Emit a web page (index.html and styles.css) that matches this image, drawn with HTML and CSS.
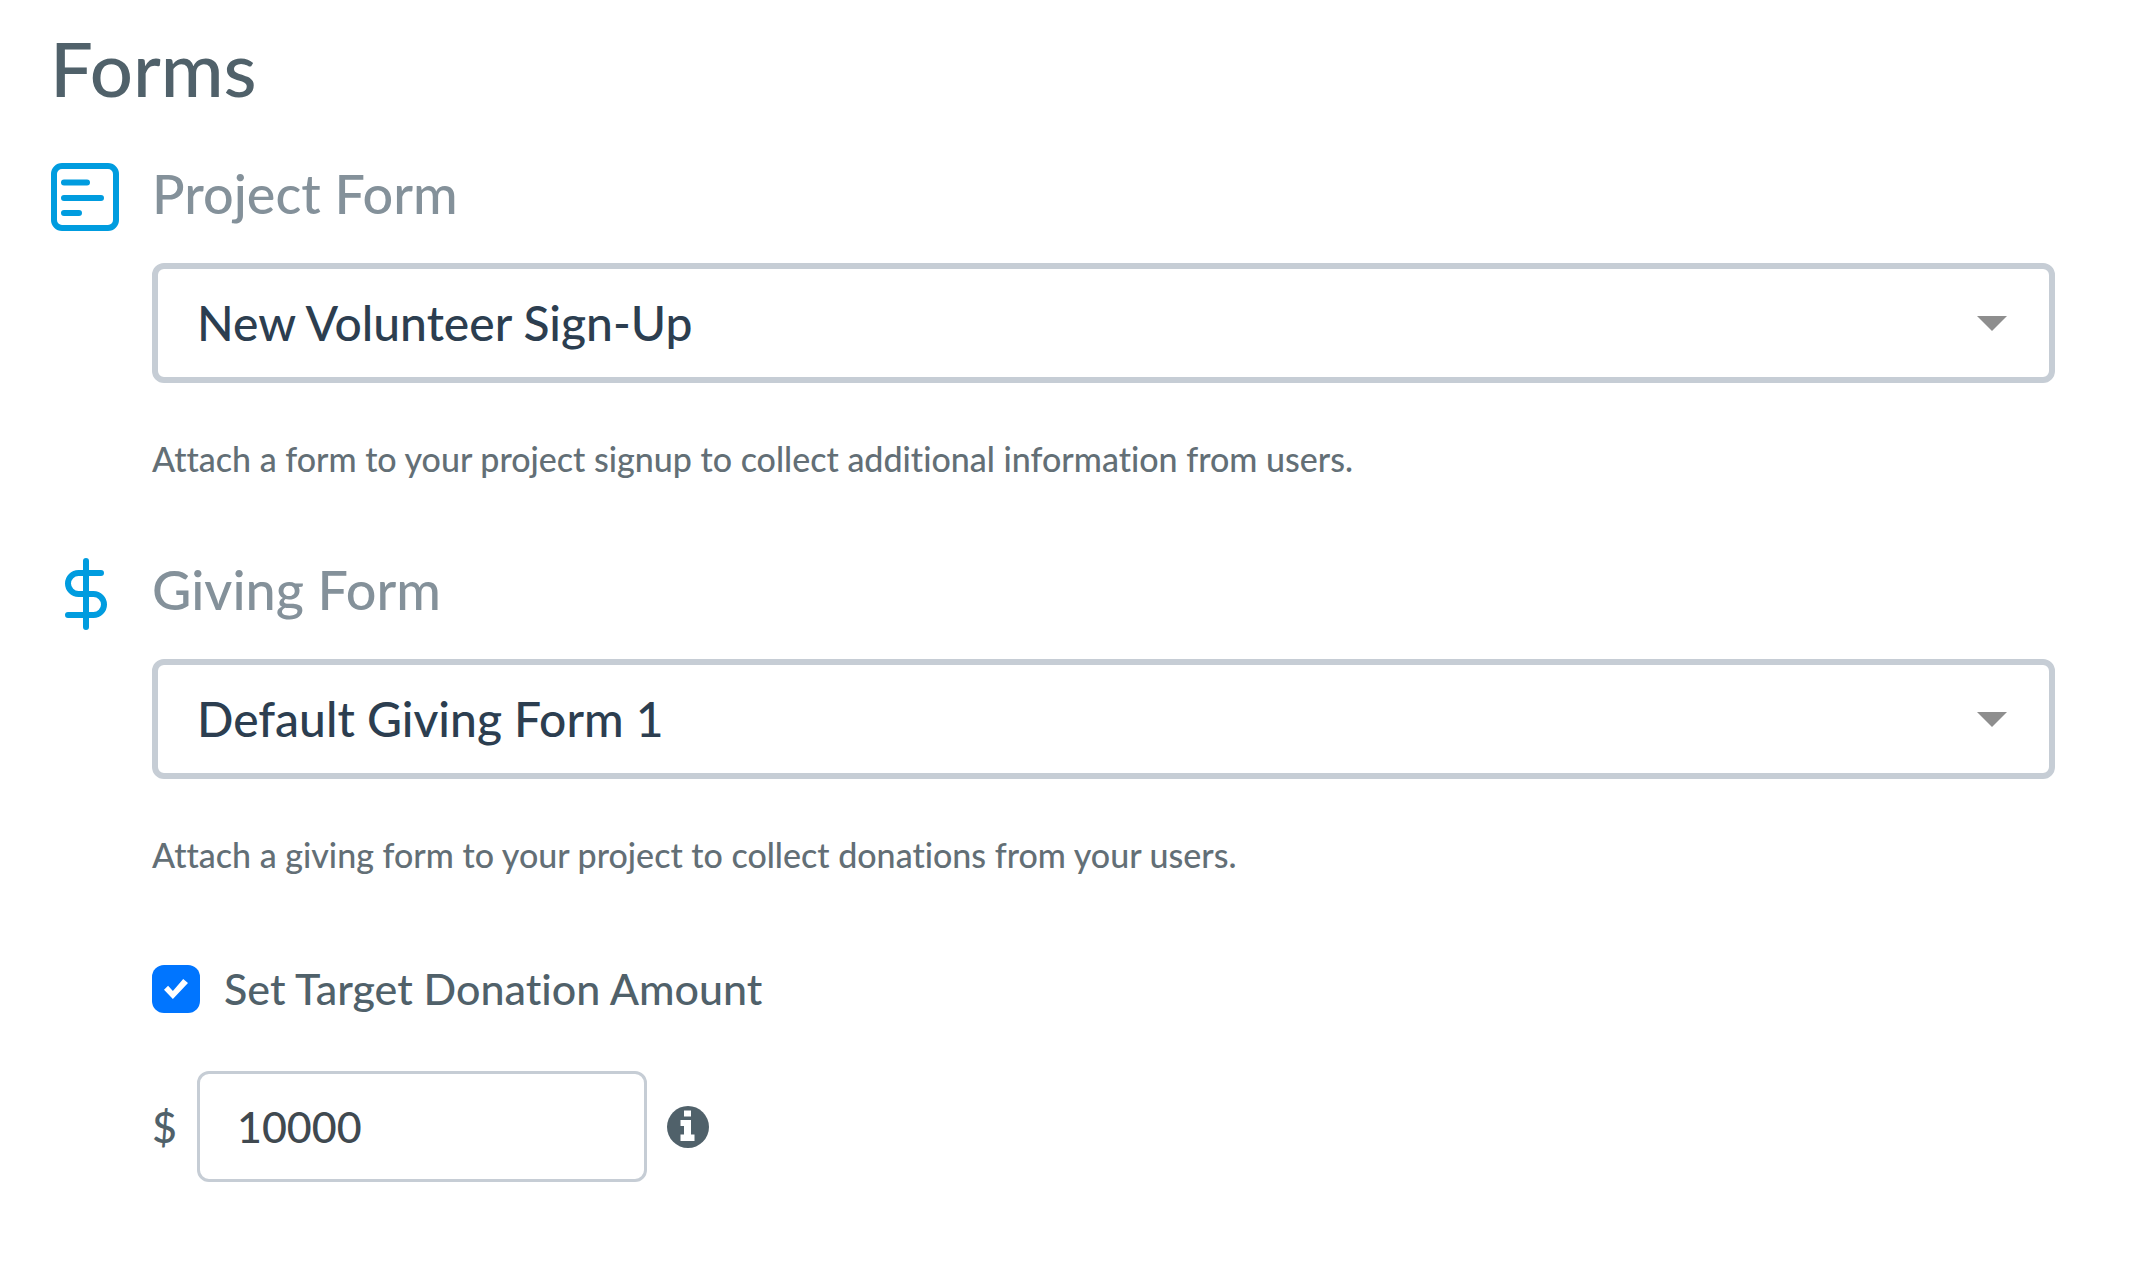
FILE: index.html
```html
<!DOCTYPE html>
<html lang="en">
<head>
  <meta charset="UTF-8" />
  <meta name="viewport" content="width=device-width, initial-scale=1.0" />
  <title>Forms</title>
  <link rel="stylesheet" href="styles.css">
</head>
<body>
  <main class="forms">
    <h1>Forms</h1>

    <!-- PROJECT FORM -->
    <section class="form-group">
      <svg class="icon" viewBox="0 0 72 72" aria-hidden="true">
        <rect x="4" y="4" width="62" height="62" rx="8" />
        <path d="M14 20.5H37M14 36H51M14 51H29" />
      </svg>
      <div class="fields">
        <h2><label for="project-form">Project Form</label></h2>
        <div class="select">
          <select id="project-form">
            <option>New Volunteer Sign-Up</option>
          </select>
        </div>
        <p class="help">Attach a form to your project signup to collect additional information from users.</p>
      </div>
    </section>

    <!-- GIVING FORM -->
    <section class="form-group">
      <svg class="icon" viewBox="0 0 24 24" aria-hidden="true">
        <path class="dollar" d="M12 1V23M17 5H9.5a3.5 3.5 0 0 0 0 7h5a3.5 3.5 0 0 1 0 7H6" />
      </svg>
      <div class="fields">
        <h2><label for="giving-form">Giving Form</label></h2>
        <div class="select">
          <select id="giving-form">
            <option>Default Giving Form 1</option>
          </select>
        </div>
        <p class="help">Attach a giving form to your project to collect donations from your users.</p>

        <div class="check">
          <input type="checkbox" id="set-target" checked>
          <label for="set-target">Set Target Donation Amount</label>
        </div>

        <div class="amount">
          <label for="target-amount">$</label>
          <input type="text" id="target-amount" inputmode="numeric" value="10000">
          <button type="button" class="info" aria-label="About the target amount">
            <svg viewBox="0 0 42 42" aria-hidden="true">
              <circle cx="21" cy="21" r="21" />
              <path d="M17 4.500h7v6h-7zM13.500 14H24v14.500h3.500V35h-14v-6.500H17V20h-3.500z" />
            </svg>
          </button>
        </div>
      </div>
    </section>
  </main>
</body>
</html>
```
FILE: styles.css
```css
:root {
  --title: #50616a;
  --heading: #84919a;
  --text: #2c3e50;
  --help: #636f76;
  --border: #c6cdd5;
  --blue: #009cdf;
  --check: #0075ff;
}

/* RESET & BASE */
* { margin:0; padding:0; box-sizing:border-box; }
body {
  background:#fff; color:var(--title);
  font-family:Lato, sans-serif; font-weight:500; font-variant-ligatures:none;
}
input, select, button { font-family:inherit; font-weight:inherit; }

.forms { padding:22px 83px 82px 50px; }

h1 { font-size:76px; line-height:92px; font-weight:500; margin-bottom:48px; }
h2 { font-size:54px; line-height:64px; font-weight:500; color:var(--heading); margin-bottom:37px; }

/* FORM GROUPS */
.form-group { display:flex; gap:30px; }
.form-group + .form-group { margin-top:78px; }
.fields { flex:1; min-width:0; }

.icon {
  flex:none; width:72px; height:72px;
  fill:none; stroke:var(--blue); stroke-width:6;
  stroke-linecap:round; stroke-linejoin:round;
}
.icon .dollar { stroke-width:2; }

.help { margin-top:54px; font-size:34px; line-height:43px; color:var(--help); }

/* SELECT */
.select { position:relative; }
.select select {
  display:block; width:100%; height:120px; padding:0 90px 2px 39px;
  appearance:none; background:#fff; color:var(--text);
  border:6px solid var(--border); border-radius:12px; font-size:48px;
}
.select::after {
  content:''; position:absolute; top:53px; right:48px;
  border:15px solid transparent; border-top-color:#8e8e8e; border-bottom:0;
  pointer-events:none;
}

/* CHECKBOX */
.check { display:flex; align-items:center; gap:24px; margin-top:89px; font-size:43px; line-height:48px; }
.check input {
  display:grid; place-content:center; width:48px; height:48px;
  appearance:none; background:var(--check); border-radius:12px;
}
.check input::before {
  content:''; width:24px; height:20px; background:#fff; visibility:hidden;
  clip-path:polygon(0 54%, 17% 34%, 37% 60%, 80% 0, 100% 20%, 37% 100%);
}
.check input:checked::before { visibility:visible; }

/* AMOUNT */
.amount { display:flex; align-items:center; gap:20px; margin-top:58px; font-size:43px; }
.amount input {
  width:450px; height:111px; padding:0 37px;
  border:3px solid var(--border); border-radius:12px;
  color:#404950; font-size:43px;
}
.info { width:42px; height:42px; border:0; background:none; }
.info svg { display:block; fill:var(--title); }
.info path { fill:#fff; }
```
